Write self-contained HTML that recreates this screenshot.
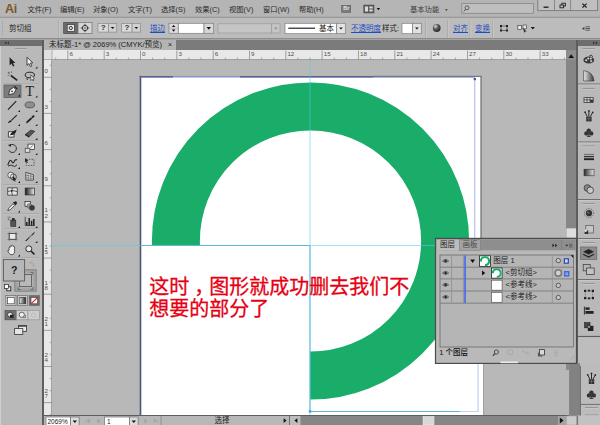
<!DOCTYPE html>
<html lang="zh-CN">
<head>
<meta charset="utf-8">
<title>Ai</title>
<style>
html,body{margin:0;padding:0;}
body{width:600px;height:425px;overflow:hidden;background:#b3b3b3;position:relative;
 font-family:"Liberation Sans","Noto Sans CJK SC",sans-serif;font-size:7.5px;color:#1c1c1c;}
.a{position:absolute;}
.t{position:absolute;white-space:nowrap;font-size:7.5px;line-height:10px;color:#222;}
.lk{color:#1d4fc4;text-decoration:underline;}
#menubar{left:0;top:0;width:600px;height:18px;background:#b5b5b5;}
#ctrl{left:0;top:18px;width:600px;height:22px;background:#bcbcbc;}
#tabbar{left:0;top:40px;width:600px;height:10px;background:#7b7b7b;}
#tab{left:44px;top:40px;width:132px;height:10px;background:#b4b4b4;}
#tools{left:0;top:46px;width:42px;height:379px;background:#b9b9b9;}
#toolhead{left:0;top:40px;width:42px;height:6px;background:#6e6e6e;}
#toolborder{left:42px;top:40px;width:2px;height:385px;background:#5e5e5e;}
#hruler{left:44px;top:50px;width:522px;height:10px;background:#e8e8e8;border-bottom:1px solid #a2a2a2;box-sizing:border-box;}
#vruler{left:44px;top:60px;width:8px;height:356px;background:#e8e8e8;border-right:1px solid #a2a2a2;box-sizing:border-box;}
#canvas{left:52px;top:60px;width:514px;height:356px;background:#b8b8b8;}
#vscroll{left:566px;top:50px;width:10px;height:366px;background:#868686;}
#dock{left:578px;top:46px;width:22px;height:379px;background:#b9b9b9;}
#dockhead{left:576px;top:40px;width:24px;height:6px;background:#6e6e6e;}
#dockborder{left:576px;top:40px;width:2px;height:326px;background:#5e5e5e;}
#status{left:44px;top:416px;width:534px;height:9px;background:#b6b6b6;}
.rl{position:absolute;font-size:6.2px;line-height:6px;color:#505050;}
.inp{position:absolute;background:#fff;border:1px solid #7d7d7d;box-sizing:border-box;}
.btn{position:absolute;background:#c9c9c9;border:1px solid #7d7d7d;box-sizing:border-box;}
</style>
</head>
<body>
<div class="a" id="menubar"></div>
<div class="a" id="ctrl"></div>
<div class="a" id="tabbar"></div>
<div class="a" id="tab"></div>
<div class="a" id="toolhead"></div>
<div class="a" id="tools"></div>
<div class="a" id="toolborder"></div>
<div class="a" id="hruler"></div>
<div class="a" id="vruler"></div>
<div class="a" id="canvas"></div>
<div class="a" id="vscroll"></div>
<div class="a" id="status"></div>
<div class="a" id="dockhead"></div>
<div class="a" id="dock"></div>
<div class="a" id="dockborder"></div>
<svg class="a" style="left:0;top:0;" width="600" height="425" viewBox="0 0 600 425">
<rect x="140" y="76" width="340.8" height="340" fill="#ffffff"/>
<rect x="476" y="300" width="7.6" height="116" fill="#ffffff"/>
<defs><clipPath id="cp"><path d="M140 60H480V420H310V245.5H140Z"/></clipPath></defs>
<g clip-path="url(#cp)"><circle cx="310.5" cy="241" r="134.6" fill="none" stroke="#1aad69" stroke-width="48"/></g>
<path d="M140.5 75.8V416" stroke="#4a5480" stroke-width="1.6"/>
<path d="M139.5 76.8H373" stroke="#8a94c8" stroke-width="1.6"/>
<path d="M373 76.4H481.4" stroke="#77778a" stroke-width="1.1"/><path d="M373 77.5H475" stroke="#aab4e6" stroke-width="1"/>
<path d="M139.5 76.8H173M240 76.8H373" stroke="#59638f" stroke-width="1.6"/>
<path d="M481 76V300" stroke="#5c5c5c" stroke-width="1"/>
<path d="M484 300V416" stroke="#5c5c5c" stroke-width="1"/>
<path d="M474.8 78V300" stroke="#a6b2ea" stroke-width="1"/>
<path d="M478 300V412" stroke="#b4c6ea" stroke-width="1"/>
<rect x="473.6" y="78" width="2.4" height="2.2" fill="#4a5ab0"/>
<path d="M52 245.5H566" stroke="#4fd0e6" stroke-opacity="0.55" stroke-width="1"/>
<path d="M310 60V416" stroke="#4fd0e6" stroke-opacity="0.55" stroke-width="1"/>
<path d="M141.5 245.5H310V411.5H460" stroke="#5fb8d8" stroke-width="1" fill="none"/>
<path d="M460 411.5H478" stroke="#c4d6ee" stroke-width="1" fill="none"/>
<rect x="308.8" y="410.2" width="2.4" height="2.4" fill="#3aa0d8"/>
<text x="149.3" y="293.8" font-family='"Liberation Sans","Noto Sans CJK SC",sans-serif' font-size="20" font-weight="400" fill="#e60012" stroke="#e60012" stroke-width="0.3">这时<tspan dx="5">，</tspan><tspan dx="-5">图形就成功删去我们不</tspan></text>
<text x="149.3" y="316.3" font-family='"Liberation Sans","Noto Sans CJK SC",sans-serif' font-size="20" font-weight="400" fill="#e60012" stroke="#e60012" stroke-width="0.3">想要的部分了</text>
<path d="M55.7 57.4V60" stroke="#8f8f8f" stroke-width="0.7"/>
<path d="M67.8 50.5V60" stroke="#8c8c8c" stroke-width="0.8"/>
<path d="M80.0 57.4V60" stroke="#8f8f8f" stroke-width="0.7"/>
<path d="M92.1 57.4V60" stroke="#8f8f8f" stroke-width="0.7"/>
<path d="M104.2 50.5V60" stroke="#8c8c8c" stroke-width="0.8"/>
<path d="M116.3 57.4V60" stroke="#8f8f8f" stroke-width="0.7"/>
<path d="M128.4 57.4V60" stroke="#8f8f8f" stroke-width="0.7"/>
<path d="M140.5 50.5V60" stroke="#8c8c8c" stroke-width="0.8"/>
<path d="M152.6 57.4V60" stroke="#8f8f8f" stroke-width="0.7"/>
<path d="M164.7 57.4V60" stroke="#8f8f8f" stroke-width="0.7"/>
<path d="M176.8 50.5V60" stroke="#8c8c8c" stroke-width="0.8"/>
<path d="M188.9 57.4V60" stroke="#8f8f8f" stroke-width="0.7"/>
<path d="M201.0 57.4V60" stroke="#8f8f8f" stroke-width="0.7"/>
<path d="M213.2 50.5V60" stroke="#8c8c8c" stroke-width="0.8"/>
<path d="M225.3 57.4V60" stroke="#8f8f8f" stroke-width="0.7"/>
<path d="M237.4 57.4V60" stroke="#8f8f8f" stroke-width="0.7"/>
<path d="M249.5 50.5V60" stroke="#8c8c8c" stroke-width="0.8"/>
<path d="M261.6 57.4V60" stroke="#8f8f8f" stroke-width="0.7"/>
<path d="M273.7 57.4V60" stroke="#8f8f8f" stroke-width="0.7"/>
<path d="M285.8 50.5V60" stroke="#8c8c8c" stroke-width="0.8"/>
<path d="M297.9 57.4V60" stroke="#8f8f8f" stroke-width="0.7"/>
<path d="M310.0 57.4V60" stroke="#8f8f8f" stroke-width="0.7"/>
<path d="M322.1 50.5V60" stroke="#8c8c8c" stroke-width="0.8"/>
<path d="M334.3 57.4V60" stroke="#8f8f8f" stroke-width="0.7"/>
<path d="M346.4 57.4V60" stroke="#8f8f8f" stroke-width="0.7"/>
<path d="M358.5 50.5V60" stroke="#8c8c8c" stroke-width="0.8"/>
<path d="M370.6 57.4V60" stroke="#8f8f8f" stroke-width="0.7"/>
<path d="M382.7 57.4V60" stroke="#8f8f8f" stroke-width="0.7"/>
<path d="M394.8 50.5V60" stroke="#8c8c8c" stroke-width="0.8"/>
<path d="M406.9 57.4V60" stroke="#8f8f8f" stroke-width="0.7"/>
<path d="M419.0 57.4V60" stroke="#8f8f8f" stroke-width="0.7"/>
<path d="M431.1 50.5V60" stroke="#8c8c8c" stroke-width="0.8"/>
<path d="M443.2 57.4V60" stroke="#8f8f8f" stroke-width="0.7"/>
<path d="M455.4 57.4V60" stroke="#8f8f8f" stroke-width="0.7"/>
<path d="M467.5 50.5V60" stroke="#8c8c8c" stroke-width="0.8"/>
<path d="M479.6 57.4V60" stroke="#8f8f8f" stroke-width="0.7"/>
<path d="M491.7 57.4V60" stroke="#8f8f8f" stroke-width="0.7"/>
<path d="M503.8 50.5V60" stroke="#8c8c8c" stroke-width="0.8"/>
<path d="M515.9 57.4V60" stroke="#8f8f8f" stroke-width="0.7"/>
<path d="M528.0 57.4V60" stroke="#8f8f8f" stroke-width="0.7"/>
<path d="M540.1 50.5V60" stroke="#8c8c8c" stroke-width="0.8"/>
<path d="M552.2 57.4V60" stroke="#8f8f8f" stroke-width="0.7"/>
<path d="M564.4 57.4V60" stroke="#8f8f8f" stroke-width="0.7"/>
<path d="M49.6 65.2H52" stroke="#8f8f8f" stroke-width="0.7"/>
<path d="M44 77.3H52" stroke="#8c8c8c" stroke-width="0.8"/>
<path d="M49.6 89.3H52" stroke="#8f8f8f" stroke-width="0.7"/>
<path d="M49.6 101.4H52" stroke="#8f8f8f" stroke-width="0.7"/>
<path d="M44 113.4H52" stroke="#8c8c8c" stroke-width="0.8"/>
<path d="M49.6 125.5H52" stroke="#8f8f8f" stroke-width="0.7"/>
<path d="M49.6 137.5H52" stroke="#8f8f8f" stroke-width="0.7"/>
<path d="M44 149.6H52" stroke="#8c8c8c" stroke-width="0.8"/>
<path d="M49.6 161.7H52" stroke="#8f8f8f" stroke-width="0.7"/>
<path d="M49.6 173.7H52" stroke="#8f8f8f" stroke-width="0.7"/>
<path d="M44 185.8H52" stroke="#8c8c8c" stroke-width="0.8"/>
<path d="M49.6 197.8H52" stroke="#8f8f8f" stroke-width="0.7"/>
<path d="M49.6 209.8H52" stroke="#8f8f8f" stroke-width="0.7"/>
<path d="M44 221.9H52" stroke="#8c8c8c" stroke-width="0.8"/>
<path d="M49.6 233.9H52" stroke="#8f8f8f" stroke-width="0.7"/>
<path d="M49.6 246.0H52" stroke="#8f8f8f" stroke-width="0.7"/>
<path d="M44 258.1H52" stroke="#8c8c8c" stroke-width="0.8"/>
<path d="M49.6 270.1H52" stroke="#8f8f8f" stroke-width="0.7"/>
<path d="M49.6 282.2H52" stroke="#8f8f8f" stroke-width="0.7"/>
<path d="M44 294.2H52" stroke="#8c8c8c" stroke-width="0.8"/>
<path d="M49.6 306.2H52" stroke="#8f8f8f" stroke-width="0.7"/>
<path d="M49.6 318.3H52" stroke="#8f8f8f" stroke-width="0.7"/>
<path d="M44 330.3H52" stroke="#8c8c8c" stroke-width="0.8"/>
<path d="M49.6 342.4H52" stroke="#8f8f8f" stroke-width="0.7"/>
<path d="M49.6 354.4H52" stroke="#8f8f8f" stroke-width="0.7"/>
<path d="M44 366.5H52" stroke="#8c8c8c" stroke-width="0.8"/>
<path d="M49.6 378.6H52" stroke="#8f8f8f" stroke-width="0.7"/>
<path d="M49.6 390.6H52" stroke="#8f8f8f" stroke-width="0.7"/>
<path d="M44 402.6H52" stroke="#8c8c8c" stroke-width="0.8"/>
<path d="M49.6 414.7H52" stroke="#8f8f8f" stroke-width="0.7"/>
<rect x="44" y="50" width="8" height="10" fill="#e0e0e0"/>
<path d="M52 50V60M44 59.5H52" stroke="#a2a2a2" stroke-width="0.8"/>
<path d="M0 17.5H600" stroke="#9a9a9a" stroke-width="1"/><path d="M0 16.5H600" stroke="#acacac" stroke-width="1"/>
<path d="M0 38.7H600" stroke="#8c8c8c" stroke-width="1.6"/>
<path d="M2.5 21V37" stroke="#9a9a9a" stroke-width="1" stroke-dasharray="1 1"/>
<path d="M58.5 20V38" stroke="#a4a4a4" stroke-width="0.8"/><path d="M59.3 20V38" stroke="#cacaca" stroke-width="0.8"/>
<path d="M425.5 20V38" stroke="#a4a4a4" stroke-width="0.8"/><path d="M426.3 20V38" stroke="#cacaca" stroke-width="0.8"/>
<path d="M447.5 20V38" stroke="#a4a4a4" stroke-width="0.8"/><path d="M448.3 20V38" stroke="#cacaca" stroke-width="0.8"/>
<path d="M470 20V38" stroke="#a4a4a4" stroke-width="0.8"/><path d="M470.8 20V38" stroke="#cacaca" stroke-width="0.8"/>
<path d="M492.5 20V38" stroke="#a4a4a4" stroke-width="0.8"/><path d="M493.3 20V38" stroke="#cacaca" stroke-width="0.8"/>
<rect x="63.7" y="22.5" width="14.3" height="11" fill="#6c6c6c" stroke="#4e4e4e" stroke-width="0.8"/>
<rect x="67.2" y="24.6" width="7.2" height="6.8" fill="#e8e8e8" stroke="#2a2a2a" stroke-width="0.6"/>
<circle cx="70.8" cy="28" r="1.6" fill="#e8e8e8" stroke="#222" stroke-width="0.9"/>
<rect x="78" y="22.5" width="14" height="11" fill="#d6d6d6" stroke="#7a7a7a" stroke-width="0.8"/>
<circle cx="85" cy="28" r="2.7" fill="none" stroke="#222" stroke-width="0.8"/><path d="M85 23.8V26.2M85 29.8V32.2M80.8 28H83.2M86.8 28H89.2" stroke="#222" stroke-width="0.8"/><circle cx="85" cy="28" r="0.7" fill="#222"/>
<rect x="98" y="23.5" width="10.4" height="8.6" fill="#d9d9d9" stroke="#8a8a8a" stroke-width="0.7"/>
<rect x="108.4" y="23.5" width="8.3" height="8.6" fill="#d0d0d0" stroke="#8a8a8a" stroke-width="0.7"/>
<path d="M110.8 26.9H114.39999999999999L112.6 29.1Z" fill="#111"/>
<rect x="121.7" y="23.5" width="10.4" height="8.6" fill="#d9d9d9" stroke="#8a8a8a" stroke-width="0.7"/>
<rect x="132.1" y="23.5" width="8.3" height="8.6" fill="#d0d0d0" stroke="#8a8a8a" stroke-width="0.7"/>
<path d="M134.5 26.9H138.10000000000002L136.3 29.1Z" fill="#111"/>
<rect x="169" y="23.3" width="9.3" height="10" fill="#dcdcdc" stroke="#7d7d7d" stroke-width="0.7"/>
<path d="M171.79999999999998 27.1H175.4L173.6 24.9Z" fill="#111"/>
<path d="M171.79999999999998 29.5H175.4L173.6 31.700000000000003Z" fill="#111"/>
<path d="M169 28.3H178.3" stroke="#9a9a9a" stroke-width="0.5"/>
<rect x="178.3" y="23.3" width="25.7" height="10" fill="#ffffff" stroke="#7d7d7d" stroke-width="0.7"/>
<rect x="204" y="23.3" width="9.7" height="10" fill="#d6d6d6" stroke="#7d7d7d" stroke-width="0.7"/>
<path d="M206.60000000000002 26.900000000000002H211.0L208.8 29.7Z" fill="#111"/>
<rect x="218" y="23.8" width="53.7" height="9.2" fill="#c5c5c5" stroke="#9a9a9a" stroke-width="0.7"/>
<rect x="271.7" y="23.8" width="8.3" height="9.2" fill="#c5c5c5" stroke="#9a9a9a" stroke-width="0.7"/>
<path d="M274.0 27.4H277.6L275.8 29.6Z" fill="#8a8a8a"/>
<rect x="285" y="23.3" width="51.7" height="10.4" fill="#ffffff" stroke="#7d7d7d" stroke-width="0.7"/>
<path d="M288.3 28.2H315" stroke="#111" stroke-width="1.1"/>
<rect x="336.7" y="23.3" width="8.6" height="10.4" fill="#e4e4e4" stroke="#7d7d7d" stroke-width="0.7"/>
<path d="M339.2 27.4H342.8L341 29.6Z" fill="#111"/>
<rect x="402" y="23.3" width="10.5" height="10.4" fill="#ffffff" stroke="#7d7d7d" stroke-width="0.7"/>
<rect x="412.5" y="23.3" width="8.8" height="10.4" fill="#e0e0e0" stroke="#7d7d7d" stroke-width="0.7"/>
<path d="M415.09999999999997 27.4H418.7L416.9 29.6Z" fill="#111"/>
<defs><radialGradient id="gl" cx="0.35" cy="0.3" r="0.8"><stop offset="0" stop-color="#d8d8d8"/><stop offset="0.45" stop-color="#555"/><stop offset="1" stop-color="#222"/></radialGradient></defs>
<circle cx="436.7" cy="28" r="3.9" fill="url(#gl)"/>
<path d="M500 25H502V27H500ZM506 25H508V27H506ZM500 29.5H502V31.5H500ZM506 29.5H508V31.5H506Z" fill="#222"/><path d="M502 26H506M502 30.5H506M501 27V29.5M507 27V29.5" stroke="#444" stroke-width="0.7"/>
<rect x="517.8" y="25.6" width="3.6" height="3.8" fill="#e8e8e8" stroke="#333" stroke-width="0.6"/>
<rect x="523" y="25" width="3.6" height="3.8" fill="#e8e8e8" stroke="#333" stroke-width="0.6"/>
<path d="M523 28L526.6 31.5L525 31.6L524.4 33L523 28Z" fill="#222"/>
<path d="M530.8 26.9H534.8L532.8 29.5Z" fill="#111"/>
<path d="M582 28.5L584.4 27V30Z" fill="#333"/><path d="M585.4 26.8H590M585.4 28.5H590M585.4 30.2H590" stroke="#444" stroke-width="0.8"/>
<rect x="341.7" y="5.4" width="9" height="7" fill="#7c7c7c" stroke="#5a5a5a" stroke-width="0.6"/>
<rect x="363.8" y="5" width="10.2" height="8" fill="#5e5e5e" stroke="#444" stroke-width="0.5"/>
<path d="M365 6.5H368V11.5H365ZM369.4 6.5H372.6V8.4H369.4ZM369.4 9.6H372.6V11.5H369.4Z" fill="#dadada"/>
<path d="M376.7 8.1H380.09999999999997L378.4 10.299999999999999Z" fill="#111"/>
<path d="M445.09999999999997 9.299999999999999H447.7L446.4 11.1Z" fill="#333"/>
<rect x="461.8" y="3.6" width="71.7" height="9.7" fill="#bfbfbf" stroke="#858585" stroke-width="0.8"/>
<circle cx="467" cy="7.8" r="2" fill="none" stroke="#444" stroke-width="0.8"/><path d="M465.6 9.4L463.8 11.4" stroke="#444" stroke-width="1"/>
<rect x="537.8" y="-1" width="59.8" height="11.6" fill="#bfbfbf" stroke="#7a7a7a" stroke-width="0.9"/>
<path d="M554.5 0V10.6M570.6 0V10.6" stroke="#7a7a7a" stroke-width="0.8"/>
<path d="M543.5 7.2H548.5" stroke="#222" stroke-width="1.4"/>
<rect x="561.8" y="3.2" width="3.6" height="2.8" fill="none" stroke="#222" stroke-width="0.9"/><rect x="560" y="5" width="3.6" height="2.8" fill="#bfbfbf" stroke="#222" stroke-width="0.9"/>
<path d="M582.4 3.6L586.6 7.6M586.6 3.6L582.4 7.6" stroke="#222" stroke-width="1.3"/>
<path d="M6.2 41.6L4.6 43L6.2 44.4ZM8.8 41.6L7.2 43L8.8 44.4Z" fill="#2a2a2a"/>
<path d="M593.2 41.6L594.8 43L593.2 44.4ZM595.8 41.6L597.4 43L595.8 44.4Z" fill="#2a2a2a"/>
<path d="M15 48.5H26.5" stroke="#8e8e8e" stroke-width="1"/><path d="M15 49.3H26.5" stroke="#d0d0d0" stroke-width="0.6"/>
<path d="M0.5 46V425" stroke="#cfcfcf" stroke-width="1"/>
<path d="M3 84H39" stroke="#9c9c9c" stroke-width="0.7"/><path d="M3 84.7H39" stroke="#cbcbcb" stroke-width="0.6"/>
<path d="M3 140.5H39" stroke="#9c9c9c" stroke-width="0.7"/><path d="M3 141.2H39" stroke="#cbcbcb" stroke-width="0.6"/>
<path d="M3 184.7H39" stroke="#9c9c9c" stroke-width="0.7"/><path d="M3 185.39999999999998H39" stroke="#cbcbcb" stroke-width="0.6"/>
<path d="M3 213.5H39" stroke="#9c9c9c" stroke-width="0.7"/><path d="M3 214.2H39" stroke="#cbcbcb" stroke-width="0.6"/>
<path d="M3 228.5H39" stroke="#9c9c9c" stroke-width="0.7"/><path d="M3 229.2H39" stroke="#cbcbcb" stroke-width="0.6"/>
<path d="M3 257.5H39" stroke="#9c9c9c" stroke-width="0.7"/><path d="M3 258.2H39" stroke="#cbcbcb" stroke-width="0.6"/>
<g transform="translate(12.4 62)"><path d="M-2.8 -4.8L-2.8 3.4L-0.9 1.6L0.6 4.6L2 3.9L0.6 1L3 0.9Z" fill="#222"/></g>
<g transform="translate(29.8 62)"><path d="M-2.8 -4.8L-2.8 3.4L-0.9 1.6L0.6 4.6L2 3.9L0.6 1L3 0.9Z" fill="#f2f2f2" stroke="#222" stroke-width="0.8"/></g>
<path d="M37.4 66.6V68.6H35.4Z" fill="#111"/>
<g transform="translate(12.4 76)"><path d="M-1.5 -0.5L4.8 4.4" stroke="#222" stroke-width="1.6"/><path d="M-3.6 -4.2V-2.2M-4.6 -3.2H-2.6M-0.8 -4.6V-3M-4.8 -0.4H-3.2M-2.6 -1.6L-1.6 -0.6" stroke="#555" stroke-width="0.7"/></g>
<g transform="translate(29.8 76)"><ellipse cx="0" cy="-1" rx="4.6" ry="2.8" fill="none" stroke="#222" stroke-width="1"/><path d="M-2.6 1.6Q-3.6 3.2 -2 4" stroke="#222" stroke-width="0.9" fill="none"/><path d="M1 -1.2V4.6L2.2 3.4L3.2 5L3.9 4.6L3 3L4.6 2.8Z" fill="#f2f2f2" stroke="#222" stroke-width="0.6"/></g>
<rect x="4" y="85" width="17" height="12.4" fill="#7d7d7d" stroke="#565656" stroke-width="0.7"/>
<g transform="translate(12.4 91)"><path d="M-3.8 3.8L-2.6 -1.2L1.2 -3.6L3.6 -1.2L1.2 2.6Z" fill="#efefef" stroke="#222" stroke-width="0.8"/><path d="M1.6 -4.4L4.4 -1.6L5.2 -2.6L2.6 -5.2Z" fill="#222"/><circle cx="-0.4" cy="0.4" r="0.8" fill="#222"/></g>
<path d="M20 94.4V96.4H18Z" fill="#111"/>
<path d="M37.4 95.6V97.6H35.4Z" fill="#111"/>
<g transform="translate(12.4 105.5)"><path d="M-4.4 4.2L3.8 -4.4" stroke="#222" stroke-width="1.2"/></g>
<path d="M20.0 110.1V112.1H18.0Z" fill="#111"/>
<g transform="translate(29.8 105.5)"><ellipse cx="0" cy="-0.6" rx="4.8" ry="3" fill="#8e8e8e" stroke="#444" stroke-width="0.7"/></g>
<path d="M37.4 110.1V112.1H35.4Z" fill="#111"/>
<g transform="translate(12.4 119.5)"><path d="M4.4 -4.4L-0.8 0.6" stroke="#222" stroke-width="1.1"/><path d="M-1 0.4Q-3.8 1 -4.6 3.4Q-2 3.6 -0.4 1.6Z" fill="#222"/></g>
<path d="M20.0 124.1V126.1H18.0Z" fill="#111"/>
<g transform="translate(29.8 119.5)"><path d="M3.6 -4.6L5 -3.2L-1.6 3L-3.8 3.9L-3 1.8Z" fill="#222"/><path d="M1 -2.4L2.6 -0.8" stroke="#ddd" stroke-width="0.6"/></g>
<path d="M37.4 124.1V126.1H35.4Z" fill="#111"/>
<g transform="translate(12.4 133.5)"><path d="M-4 -1.8H1.6V3.6H-4Z" fill="#f0f0f0" stroke="#222" stroke-width="0.8"/><path d="M-2.6 1.8Q-0.6 -2.6 4.4 -4L3 -0.6Q1.6 2 -2.6 1.8Z" fill="#222"/></g>
<g transform="translate(29.8 133.5)"><path d="M-4.6 1L1 -3.4L5 -2.2L-0.6 3.4Z" fill="#555" stroke="#222" stroke-width="0.6"/><path d="M-4.6 1L-0.6 3.4" stroke="#222" stroke-width="1.2"/></g>
<path d="M37.4 138.1V140.1H35.4Z" fill="#111"/>
<g transform="translate(12.4 148.5)"><path d="M-2.4 -3.2A4 4 0 1 1 -3.6 1.8" fill="none" stroke="#222" stroke-width="0.9"/><path d="M-4.4 -3.4L-1.2 -4.6L-1.8 -1.6Z" fill="#222"/></g>
<path d="M20.0 153.1V155.1H18.0Z" fill="#111"/>
<g transform="translate(29.8 148.5)"><rect x="-1.8" y="-4.4" width="6.6" height="5.4" fill="#f2f2f2" stroke="#222" stroke-width="0.7"/><rect x="-4.6" y="-0.2" width="4.6" height="4" fill="#dcdcdc" stroke="#444" stroke-width="0.7"/><path d="M0.4 -0.6L3 -3" stroke="#222" stroke-width="0.6"/></g>
<path d="M37.4 153.1V155.1H35.4Z" fill="#111"/>
<g transform="translate(12.4 162.5)"><path d="M-4.6 2.6Q-2.4 -4.6 -0.6 -1Q0.6 2 2 -1.4Q3 -3.4 4.6 -2.6" fill="none" stroke="#222" stroke-width="1.1"/><path d="M-4.4 3.6Q-1 1.6 0.6 3.4T4.6 2.2" fill="none" stroke="#222" stroke-width="0.9"/></g>
<path d="M20.0 167.1V169.1H18.0Z" fill="#111"/>
<g transform="translate(29.8 162.5)"><rect x="-3.4" y="-3.2" width="7.6" height="6.2" fill="none" stroke="#333" stroke-width="0.7" stroke-dasharray="1.4 1.2"/><path d="M-4.8 -4.6V0L-3.6 -1.1L-2.8 0.6L-2 0.2L-2.8 -1.4L-1.4 -1.6Z" fill="#222"/></g>
<g transform="translate(12.4 176.5)"><circle cx="-1.6" cy="-1.4" r="3" fill="#e8e8e8" stroke="#333" stroke-width="0.7"/><circle cx="1" cy="0.4" r="3" fill="none" stroke="#333" stroke-width="0.7"/><path d="M0.4 -0.6V4.6L1.6 3.5L2.5 5.2L3.3 4.8L2.5 3.2L4 3Z" fill="#222"/></g>
<path d="M20.0 181.1V183.1H18.0Z" fill="#111"/>
<g transform="translate(29.8 176.5)"><path d="M-4 -4.2L3.6 -1.8V3.6H-4Z" fill="#e0e0e0" stroke="#222" stroke-width="0.7"/><path d="M-1.6 -3.4V3.6M1 -2.6V3.6M-4 -1.2L3.6 0M-4 1.4L3.6 1.8" stroke="#444" stroke-width="0.5"/></g>
<path d="M37.4 181.1V183.1H35.4Z" fill="#111"/>
<g transform="translate(12.4 191.5)"><rect x="-4.6" y="-3.6" width="9.4" height="7.2" fill="#e6e6e6" stroke="#222" stroke-width="0.7"/><path d="M-4.6 0Q0 -2 4.8 0M0 -3.6Q-1.6 0 0 3.6" fill="none" stroke="#222" stroke-width="0.7"/><circle cx="-0.6" cy="-0.6" r="0.9" fill="#222"/></g>
<defs><linearGradient id="tg" x1="0" x2="1"><stop offset="0" stop-color="#1a1a1a"/><stop offset="1" stop-color="#f0f0f0"/></linearGradient></defs>
<g transform="translate(29.8 191.5)"><rect x="-4.6" y="-3.4" width="9.4" height="6.8" fill="url(#tg)" stroke="#222" stroke-width="0.7"/></g>
<g transform="translate(12.4 206)"><path d="M-4.6 4.6L-3.8 2.2L0.6 -2.2L2.2 -0.6L-2.2 3.8Z" fill="#e8e8e8" stroke="#222" stroke-width="0.7"/><path d="M0.4 -3.4L3.4 -0.4L4.8 -3.4L3.4 -4.8Z" fill="#222"/></g>
<path d="M20.0 210.6V212.6H18.0Z" fill="#111"/>
<g transform="translate(29.8 206)"><rect x="-4.8" y="-4.4" width="5.4" height="5" fill="#e8e8e8" stroke="#222" stroke-width="0.7"/><circle cx="-0.4" cy="0" r="2.4" fill="#9a9a9a" stroke="#444" stroke-width="0.5"/><circle cx="2.2" cy="1.8" r="2.8" fill="#3a3a3a"/></g>
<g transform="translate(12.4 221.5)"><rect x="-1.6" y="-1.4" width="5" height="6.2" fill="#555" stroke="#222" stroke-width="0.6"/><rect x="-0.4" y="-3.4" width="2.6" height="2" fill="#222"/><path d="M-4.8 -4.2L-3.2 -3M-4.6 -2L-3 -1.6M-3 -5L-2 -3.6" stroke="#444" stroke-width="0.7"/></g>
<path d="M20.0 226.1V228.1H18.0Z" fill="#111"/>
<g transform="translate(29.8 221.5)"><path d="M-4.6 -4.6V4H5" fill="none" stroke="#222" stroke-width="0.7"/><path d="M-3 4V0.4M-0.6 4V-3.6M1.8 4V-0.8M4 4V-2.4" stroke="#222" stroke-width="1.5"/></g>
<path d="M37.4 226.1V228.1H35.4Z" fill="#111"/>
<g transform="translate(12.4 236.5)"><rect x="-3.2" y="-3" width="6.8" height="5.8" fill="#eaeaea" stroke="#222" stroke-width="0.7"/><path d="M-5 -3H5.2M-5 2.8H5.2M-3.2 -4.8V4.6M3.6 -4.8V4.6" stroke="#555" stroke-width="0.5"/></g>
<g transform="translate(29.8 236.5)"><path d="M-4.8 4.4L3.4 -3.6L5 -4.8L4.2 -2.8L-3.4 4.6Z" fill="#222"/><path d="M-1 1.4L2.4 -1.8" stroke="#ddd" stroke-width="0.6"/></g>
<path d="M37.4 241.1V243.1H35.4Z" fill="#111"/>
<g transform="translate(12.4 250)"><path d="M-3.4 0.6V-2.6Q-2.8 -3.4 -2.2 -2.6V-3.8Q-1.4 -4.8 -0.8 -3.8V-4.4Q0 -5.2 0.8 -4.2V-3.4Q1.6 -4.2 2.2 -3.2V1.6Q2.2 3.8 0.6 4.6H-2Q-3 3.8 -4.8 0.8Q-4.4 -0.2 -3.4 0.6Z" fill="#f0f0f0" stroke="#222" stroke-width="0.7"/></g>
<path d="M20.0 254.6V256.6H18.0Z" fill="#111"/>
<g transform="translate(29.8 250)"><circle cx="-1" cy="-1.2" r="3" fill="#e4e4e4" stroke="#222" stroke-width="0.9"/><path d="M1.2 1L4.6 4.4" stroke="#222" stroke-width="1.6"/></g>
<rect x="15" y="270" width="21" height="21" fill="#b0b0b0" stroke="#555" stroke-width="0.8"/>
<rect x="16.6" y="271.6" width="17.8" height="17.8" fill="none" stroke="#a4a4a4" stroke-width="2.4"/>
<rect x="19.4" y="274.4" width="12.2" height="12.2" fill="#b9b9b9" stroke="#555" stroke-width="0.8"/>
<path d="M18 289.6V286.8M18 289.6H20.8M33 289.6V286.8M33 289.6H30.2M33 272.4V275M33 272.4H30.4" stroke="#444" stroke-width="0.6" fill="none"/>
<rect x="3.4" y="259.6" width="21.2" height="21.4" fill="#b7b7b7" stroke="#5a5a5a" stroke-width="0.9"/>
<path d="M30.6 262.6Q33.6 262.6 33.8 265.6" fill="none" stroke="#9a9a9a" stroke-width="0.7"/><path d="M30.8 261.4L29.4 262.6L30.8 263.8ZM32.6 265.4L33.8 266.8L35 265.4Z" fill="#9a9a9a"/>
<rect x="6.8" y="286.8" width="4" height="4" fill="#f2f2f2" stroke="#222" stroke-width="0.9"/><rect x="4.4" y="284.4" width="4" height="4" fill="#fff" stroke="#222" stroke-width="0.7"/>
<defs><linearGradient id="tg2" x1="0" x2="1"><stop offset="0" stop-color="#f4f4f4"/><stop offset="1" stop-color="#222"/></linearGradient></defs>
<rect x="5.8" y="295.6" width="10.2" height="10" fill="#cfcfcf" stroke="#6a6a6a" stroke-width="0.7"/>
<rect x="7.6" y="297.4" width="6.6" height="6.4" fill="#ffffff" stroke="#333" stroke-width="0.6"/>
<rect x="17.4" y="295.6" width="10.2" height="10" fill="#cfcfcf" stroke="#6a6a6a" stroke-width="0.7"/>
<rect x="19.2" y="297.4" width="6.6" height="6.4" fill="url(#tg2)" stroke="#333" stroke-width="0.6"/>
<rect x="29.2" y="295.6" width="10.2" height="10" fill="#6e6e6e" stroke="#6a6a6a" stroke-width="0.7"/>
<rect x="31.0" y="297.4" width="6.6" height="6.4" fill="#ffffff" stroke="#333" stroke-width="0.6"/>
<path d="M31.2 303.6L37.4 297.6" stroke="#e0202a" stroke-width="1.3"/>
<rect x="5" y="310.6" width="11.4" height="9.2" fill="#6e6e6e" stroke="#4e4e4e" stroke-width="0.7"/>
<rect x="16.4" y="310.6" width="11.6" height="9.2" fill="#d2d2d2" stroke="#8a8a8a" stroke-width="0.7"/>
<rect x="28" y="310.6" width="11.4" height="9.2" fill="#cdcdcd" stroke="#9a9a9a" stroke-width="0.7"/>
<circle cx="10" cy="314.6" r="2.4" fill="#e8e8e8" stroke="#222" stroke-width="0.7"/><rect x="10" y="314.8" width="3.6" height="3" fill="#222"/>
<circle cx="21.8" cy="314.8" r="2.6" fill="#efefef" stroke="#333" stroke-width="0.7"/><path d="M22.6 317.6H25.4V315" stroke="#555" stroke-width="0.7" fill="none"/>
<circle cx="33.6" cy="315.2" r="2.2" fill="none" stroke="#b4b4b4" stroke-width="0.7"/>
<rect x="18.4" y="325.4" width="8.2" height="6" fill="#e6e6e6" stroke="#333" stroke-width="0.8"/><path d="M18.4 326.2H26.6" stroke="#333" stroke-width="1"/><rect x="14.6" y="328.6" width="8.2" height="5.8" fill="#e6e6e6" stroke="#333" stroke-width="0.8"/>
<rect x="484" y="363" width="85.5" height="53" fill="#b8b8b8"/>
<rect x="569.2" y="363" width="11" height="52.5" fill="#828282"/>
<rect x="580.2" y="363" width="20" height="62" fill="#bcbcbc"/>
<path d="M580.4 366V416" stroke="#6a6a6a" stroke-width="1"/>
<rect x="566" y="363" width="3.4" height="7" fill="#8a8a8a"/>
<rect x="566.5" y="50.5" width="9.5" height="9.5" fill="#8e8e8e"/>
<path d="M568.4 58L571.2 54.2L574 58Z" fill="#111"/>
<rect x="566.8" y="228.8" width="9" height="8.6" fill="#dedede" stroke="#f2f2f2" stroke-width="0.5"/>
<path d="M582.5 48.5H595" stroke="#8e8e8e" stroke-width="1"/><path d="M582.5 49.3H595" stroke="#d2d2d2" stroke-width="0.6"/>
<path d="M578 84H600" stroke="#6e6e6e" stroke-width="1"/><path d="M578 85H600" stroke="#cdcdcd" stroke-width="0.7"/>
<path d="M578 142H600" stroke="#6e6e6e" stroke-width="1"/><path d="M578 143H600" stroke="#cdcdcd" stroke-width="0.7"/>
<path d="M578 199.5H600" stroke="#6e6e6e" stroke-width="1"/><path d="M578 200.5H600" stroke="#cdcdcd" stroke-width="0.7"/>
<path d="M578 238.5H600" stroke="#6e6e6e" stroke-width="1"/><path d="M578 239.5H600" stroke="#cdcdcd" stroke-width="0.7"/>
<path d="M578 279.5H600" stroke="#6e6e6e" stroke-width="1"/><path d="M578 280.5H600" stroke="#cdcdcd" stroke-width="0.7"/>
<path d="M582.5 88.5H595" stroke="#8e8e8e" stroke-width="1"/><path d="M582.5 89.3H595" stroke="#d2d2d2" stroke-width="0.6"/>
<path d="M582.5 146H595" stroke="#8e8e8e" stroke-width="1"/><path d="M582.5 146.8H595" stroke="#d2d2d2" stroke-width="0.6"/>
<path d="M582.5 203.5H595" stroke="#8e8e8e" stroke-width="1"/><path d="M582.5 204.3H595" stroke="#d2d2d2" stroke-width="0.6"/>
<path d="M582.5 242.5H595" stroke="#8e8e8e" stroke-width="1"/><path d="M582.5 243.3H595" stroke="#d2d2d2" stroke-width="0.6"/>
<path d="M582.5 283.5H595" stroke="#8e8e8e" stroke-width="1"/><path d="M582.5 284.3H595" stroke="#d2d2d2" stroke-width="0.6"/>
<path d="M578 336.5H600" stroke="#5e5e5e" stroke-width="1.2"/>
<rect x="578" y="337.2" width="22" height="26" fill="#bdbdbd"/>
<g transform="translate(588.8 59.6)"><ellipse cx="0" cy="0.4" rx="5.4" ry="3.6" fill="#3a3a3a"/><circle cx="-2.6" cy="0.6" r="1" fill="#ddd"/><circle cx="-0.6" cy="-1.2" r="1" fill="#ddd"/><circle cx="2" cy="-1" r="1" fill="#ddd"/><circle cx="2.4" cy="1.6" r="1.1" fill="#bababa"/><path d="M0.6 -3.6Q3 -5.4 4 -3" stroke="#2a2a2a" stroke-width="1" fill="none"/></g>
<defs><linearGradient id="cg" x1="0" x2="1"><stop offset="0" stop-color="#e8e8e8"/><stop offset="1" stop-color="#3a3a3a"/></linearGradient><linearGradient id="gg" x1="0" x2="1"><stop offset="0" stop-color="#2a2a2a"/><stop offset="1" stop-color="#e8e8e8"/></linearGradient></defs>
<path d="M583.6 81V70.6Q593 71.6 594 81Z" fill="url(#cg)" stroke="#333" stroke-width="0.6"/>
<rect x="583.6" y="97" width="10" height="5.8" fill="#3a3a3a"/>
<path d="M584.4 97.8H586.6V99.4H584.4ZM587.4 97.8H589.6V99.4H587.4ZM590.4 97.8H592.8V99.4H590.4ZM584.4 100.2H586.6V102H584.4ZM587.4 100.2H589.6V102H587.4Z" fill="#d8d8d8"/>
<g transform="translate(588.8 116)"><rect x="-2.6" y="0.6" width="5.4" height="4.8" fill="#2e2e2e"/><path d="M-2.6 2.8H2.8M0 0.6V5.4" stroke="#8a8a8a" stroke-width="0.5"/><path d="M-1.6 0.4L-3.6 -3.6M0.1 0.4V-5M1.6 0.4L3.8 -3.4" stroke="#2a2a2a" stroke-width="1"/><circle cx="-3.7" cy="-3.8" r="0.9" fill="#2a2a2a"/><circle cx="0.1" cy="-5.1" r="0.9" fill="#2a2a2a"/><circle cx="3.9" cy="-3.6" r="0.9" fill="#2a2a2a"/></g>
<g transform="translate(588.8 132.6)"><circle cx="0" cy="-2" r="2.2" fill="#333"/><circle cx="-2.4" cy="0.8" r="2.2" fill="#333"/><circle cx="2.4" cy="0.8" r="2.2" fill="#333"/><path d="M0 0V3.4M-1.8 3.8H1.8" stroke="#333" stroke-width="1"/></g>
<path d="M584 154.4H594" stroke="#555" stroke-width="0.8"/><path d="M584 156.6H594" stroke="#333" stroke-width="1.3"/><path d="M584 159.2H594" stroke="#222" stroke-width="1.9"/>
<rect x="584" y="169.2" width="10" height="6.6" fill="url(#gg)" stroke="#333" stroke-width="0.6"/>
<circle cx="587.4" cy="188" r="3.3" fill="#8a8a8a" stroke="#333" stroke-width="0.8"/><circle cx="590.2" cy="190.2" r="3.3" fill="#d6d6d6" fill-opacity="0.8" stroke="#333" stroke-width="0.8"/>
<circle cx="589" cy="213.2" r="4.6" fill="none" stroke="#444" stroke-width="0.7" stroke-dasharray="0.9 0.9"/><circle cx="589" cy="213.2" r="3.1" fill="#333"/><circle cx="588.4" cy="212.6" r="1.2" fill="#666"/>
<rect x="585.8" y="225.6" width="7.6" height="7.4" fill="#c6c6c6" stroke="#555" stroke-width="0.7"/>
<path d="M584.6 230.4H588.2V234H584.6Z" fill="#333"/><circle cx="585.6" cy="230.8" r="1.2" fill="#e8e8e8"/>
<rect x="580.4" y="247" width="16.4" height="12.6" fill="#8c8c8c" stroke="#6a6a6a" stroke-width="0.7"/>
<path d="M588.6 249L594 251.8L588.6 254.6L583.2 251.8Z" fill="#222"/><path d="M583.2 254.2L588.6 257L594 254.2" fill="none" stroke="#222" stroke-width="1.2"/>
<rect x="583.2" y="264.4" width="7" height="6.4" fill="none" stroke="#444" stroke-width="0.8"/><rect x="586.6" y="268" width="7.6" height="6.4" fill="#c2c2c2" stroke="#444" stroke-width="0.8"/>
<rect x="585.4" y="291" width="7.2" height="7" fill="none" stroke="#555" stroke-width="0.7" stroke-dasharray="1 1"/><path d="M584 289.8H586.2V292H584ZM591.8 289.8H594V292H591.8ZM584 297H586.2V299.2H584ZM591.8 297H594V299.2H591.8ZM587.9 289.8H590.1V291.4H587.9ZM587.9 297.6H590.1V299.2H587.9Z" fill="#222"/>
<path d="M584.4 306.6V314.6" stroke="#222" stroke-width="0.9"/><rect x="585.4" y="307.4" width="4.2" height="2.4" fill="#222"/><rect x="585.4" y="311" width="8.2" height="2.8" fill="#222"/>
<rect x="584.6" y="322.6" width="5.4" height="5.2" fill="#444" stroke="#222" stroke-width="0.6"/><rect x="587.8" y="325.8" width="5.6" height="5.2" fill="#222"/><rect x="588" y="326" width="2" height="1.8" fill="#9a9a9a"/>
<g transform="translate(591.4 378.6)"><rect x="-2.6" y="0.6" width="5.4" height="4.8" fill="#2e2e2e"/><path d="M-2.6 2.8H2.8M0 0.6V5.4" stroke="#8a8a8a" stroke-width="0.5"/><path d="M-1.6 0.4L-3.6 -3.6M0.1 0.4V-5M1.6 0.4L3.8 -3.4" stroke="#2a2a2a" stroke-width="1"/><circle cx="-3.7" cy="-3.8" r="0.9" fill="#2a2a2a"/><circle cx="0.1" cy="-5.1" r="0.9" fill="#2a2a2a"/><circle cx="3.9" cy="-3.6" r="0.9" fill="#2a2a2a"/></g>
<g transform="translate(591.4 394.6)"><circle cx="0" cy="-2" r="2.2" fill="#333"/><circle cx="-2.4" cy="0.8" r="2.2" fill="#333"/><circle cx="2.4" cy="0.8" r="2.2" fill="#333"/><path d="M0 0V3.4M-1.8 3.8H1.8" stroke="#333" stroke-width="1"/></g>
<path d="M580.6 404.4H600" stroke="#6e6e6e" stroke-width="1"/>
<path d="M585 407.5H598" stroke="#8e8e8e" stroke-width="1"/><path d="M585 408.3H598" stroke="#d2d2d2" stroke-width="0.6"/>
<path d="M585 415H598" stroke="#8e8e8e" stroke-width="1"/><path d="M585 415.8H598" stroke="#d2d2d2" stroke-width="0.6"/>
<rect x="44" y="415.5" width="525" height="9.5" fill="#b8b8b8"/>
<path d="M44 415.5H569" stroke="#5e5e5e" stroke-width="1"/>
<rect x="46" y="417" width="24.5" height="8.5" fill="#ffffff" stroke="#6e6e6e" stroke-width="0.7"/>
<rect x="70.5" y="417" width="8.6" height="8.5" fill="#dcdcdc" stroke="#6e6e6e" stroke-width="0.7"/>
<path d="M72.6 420.4H77L74.8 423Z" fill="#111"/>
<path d="M86.4 419V423M87.2 421L89.6 419V423ZM96.8 421L99.2 419V423Z" fill="#a2a2a2" stroke="#a2a2a2" stroke-width="0.5"/>
<rect x="104.5" y="417" width="25" height="8.5" fill="#ffffff" stroke="#6e6e6e" stroke-width="0.7"/>
<rect x="129.5" y="417" width="8.6" height="8.5" fill="#dcdcdc" stroke="#6e6e6e" stroke-width="0.7"/>
<path d="M131.6 420.4H136L133.8 423Z" fill="#111"/>
<path d="M147.2 421L144.8 419V423ZM156.6 421L154.2 419V423ZM157.6 419V423" fill="#a2a2a2" stroke="#a2a2a2" stroke-width="0.5"/>
<path d="M161 416V425" stroke="#8a8a8a" stroke-width="0.8"/>
<path d="M283.6 418.2L286.6 420.6L283.6 423Z" fill="#111"/>
<path d="M289.5 416V425" stroke="#6e6e6e" stroke-width="1"/>
<rect x="290" y="416" width="10.5" height="9" fill="#bdbdbd"/>
<path d="M297.4 418.2L294.4 420.6L297.4 423Z" fill="#111"/>
<rect x="300.5" y="416" width="257.5" height="9" fill="#868686"/>
<rect x="423" y="416.4" width="11" height="8.6" fill="#d8d8d8" stroke="#efefef" stroke-width="0.5"/>
<rect x="558" y="416" width="8.5" height="9" fill="#a4a4a4"/>
<path d="M559.8 417.6L563.6 420.6L559.8 423.6Z" fill="#111"/>
<rect x="566.5" y="416" width="10.5" height="9" fill="#cacaca" stroke="#9a9a9a" stroke-width="0.5"/>
<rect x="578" y="415.6" width="22" height="9.4" fill="#c2c2c2"/>
<rect x="576.6" y="415.6" width="1.5" height="9.4" fill="#7a7a7a"/>
<rect x="435.5" y="238.4" width="141" height="125" fill="#b9b9b9" stroke="#4c4c4c" stroke-width="1.2"/>
<rect x="436.2" y="239.2" width="139.6" height="11.1" fill="#8e8e8e"/>
<rect x="436.6" y="239.6" width="22.8" height="10.8" fill="#bcbcbc"/>
<rect x="459.6" y="239.8" width="20.8" height="10.4" fill="#a3a3a3" stroke="#7a7a7a" stroke-width="0.5"/>
<path d="M552.4 243.6L554.4 245.4L552.4 247.2ZM555.2 243.6L557.2 245.4L555.2 247.2Z" fill="#222"/>
<path d="M561.6 240V250" stroke="#777" stroke-width="0.7"/>
<path d="M565.4 244.8H568.2L566.8 246.4Z" fill="#222"/><path d="M569 244.2H572.4M569 245.6H572.4M569 247H572.4" stroke="#444" stroke-width="0.6"/>
<rect x="440" y="255" width="133.5" height="92" fill="#b5b5b5" stroke="#6a6a6a" stroke-width="0.8"/>
<path d="M440 267.2H573.5" stroke="#747474" stroke-width="0.8"/>
<path d="M440 278.9H573.5" stroke="#747474" stroke-width="0.8"/>
<path d="M440 291H573.5" stroke="#747474" stroke-width="0.8"/>
<path d="M440 303.2H573.5" stroke="#747474" stroke-width="0.8"/>
<path d="M451.6 255V303.2M463.4 255V303.2" stroke="#8a8a8a" stroke-width="0.7"/>
<path d="M552.4 255V303.2" stroke="#8f8f8f" stroke-width="0.7"/>
<rect x="464.2" y="255.4" width="1.7" height="47.6" fill="#4a6cf0"/>
<path d="M442.6 261.1Q445.6 257.90000000000003 448.6 261.1Q445.6 264.1 442.6 261.1Z" fill="#d0d0d0" stroke="#333" stroke-width="0.7"/><circle cx="445.6" cy="261.0" r="1.3" fill="#222"/>
<path d="M442.6 273.04999999999995Q445.6 269.84999999999997 448.6 273.04999999999995Q445.6 276.04999999999995 442.6 273.04999999999995Z" fill="#d0d0d0" stroke="#333" stroke-width="0.7"/><circle cx="445.6" cy="272.94999999999993" r="1.3" fill="#222"/>
<path d="M442.6 284.95Q445.6 281.75 448.6 284.95Q445.6 287.95 442.6 284.95Z" fill="#d0d0d0" stroke="#333" stroke-width="0.7"/><circle cx="445.6" cy="284.84999999999997" r="1.3" fill="#222"/>
<path d="M442.6 297.1Q445.6 293.90000000000003 448.6 297.1Q445.6 300.1 442.6 297.1Z" fill="#d0d0d0" stroke="#333" stroke-width="0.7"/><circle cx="445.6" cy="297.0" r="1.3" fill="#222"/>
<path d="M470.2 259.6H475L472.6 263Z" fill="#111"/>
<rect x="479.5" y="255.8" width="11" height="10.6" fill="#ffffff" stroke="#333" stroke-width="0.9"/>
<defs><clipPath id="th1"><path d="M480 256.3H490V266H485V261.4H480Z"/></clipPath><clipPath id="th2"><path d="M492 268.5H501.6V277.8H496.8V273.3H492Z"/></clipPath></defs>
<circle cx="485" cy="261.1" r="4.1" fill="none" stroke="#1aad69" stroke-width="2.2" clip-path="url(#th1)"/>
<circle cx="558.3" cy="260.6" r="2.2" fill="#c8c8c8" stroke="#333" stroke-width="0.7"/>
<rect x="564.4" y="258.8" width="3.9" height="4.4" fill="#d4dcfa" stroke="#2a48b0" stroke-width="1.2"/>
<path d="M570.6 255.2H573.4V258Z" fill="#111"/>
<path d="M482 270.6V275.4L485.2 273Z" fill="#111"/>
<rect x="491.5" y="268" width="10.6" height="10.2" fill="#ffffff" stroke="#333" stroke-width="0.9"/>
<circle cx="496.8" cy="273.1" r="4" fill="none" stroke="#1aad69" stroke-width="2.1" clip-path="url(#th2)"/>
<circle cx="558.3" cy="273" r="3.2" fill="#cfcfcf" stroke="#777" stroke-width="1.5"/>
<rect x="564" y="271" width="5.4" height="5.6" fill="#4468e0"/>
<rect x="565.4" y="272.4" width="2.6" height="2.8" fill="#8aa2f2"/>
<rect x="491.5" y="280.2" width="10.6" height="10.0" fill="#ffffff" stroke="#555" stroke-width="0.7"/>
<circle cx="558.3" cy="285.4" r="2.2" fill="#c8c8c8" stroke="#333" stroke-width="0.7"/>
<rect x="491.5" y="292.3" width="10.6" height="10.0" fill="#ffffff" stroke="#555" stroke-width="0.7"/>
<circle cx="558.3" cy="297.5" r="2.2" fill="#c8c8c8" stroke="#333" stroke-width="0.7"/>
<circle cx="496.4" cy="352" r="2.1" fill="none" stroke="#333" stroke-width="0.8"/><path d="M494.9 353.6L492.8 355.8" stroke="#333" stroke-width="1.1"/>
<rect x="508" y="350" width="4.6" height="4.6" fill="none" stroke="#a4a4a4" stroke-width="0.7"/><path d="M522 351L528 353.6M528 351V354.6" stroke="#a4a4a4" stroke-width="0.8" fill="none"/>
<rect x="539.4" y="349.6" width="5" height="5.4" fill="#d8d8d8" stroke="#333" stroke-width="0.8"/><path d="M538.4 352.6V356H542.2" stroke="#333" stroke-width="0.8" fill="none"/>
<path d="M553.6 350.6H558.4M554 352.4H558M554 354H558M554 355.6H558" stroke="#a8a8a8" stroke-width="0.7"/>
<path d="M574.4 355.4L570.4 359.4M574.4 357.4L572.4 359.4" stroke="#9a9a9a" stroke-width="0.6"/>
<rect x="500.5" y="361.4" width="17.5" height="1.8" fill="#e8e8e8"/>

</svg>
<div class="t" style="left:5px;top:1px;font-size:12.5px;line-height:17px;font-weight:bold;color:#7a5530;letter-spacing:-0.2px;">Ai</div>
<div class="t" style="left:27.5px;top:5.3px;font-size:7.3px;color:#2c2c2c;">文件(F)</div>
<div class="t" style="left:60px;top:5.3px;font-size:7.3px;color:#2c2c2c;">编辑(E)</div>
<div class="t" style="left:93px;top:5.3px;font-size:7.3px;color:#2c2c2c;">对象(O)</div>
<div class="t" style="left:128px;top:5.3px;font-size:7.3px;color:#2c2c2c;">文字(T)</div>
<div class="t" style="left:161px;top:5.3px;font-size:7.3px;color:#2c2c2c;">选择(S)</div>
<div class="t" style="left:195px;top:5.3px;font-size:7.3px;color:#2c2c2c;">效果(C)</div>
<div class="t" style="left:229px;top:5.3px;font-size:7.3px;color:#2c2c2c;">视图(V)</div>
<div class="t" style="left:263px;top:5.3px;font-size:7.3px;color:#2c2c2c;">窗口(W)</div>
<div class="t" style="left:299px;top:5.3px;font-size:7.3px;color:#2c2c2c;">帮助(H)</div>
<div class="t" style="left:410px;top:5.3px;font-size:7.3px;color:#3a3a3a;">基本功能</div>
<div class="t" style="left:9px;top:24px;">剪切组</div>
<div class="t lk" style="left:150px;top:24px;">描边</div>
<div class="t" style="left:319px;top:24px;">基本</div>
<div class="t lk" style="left:351px;top:24px;">不透明度</div>
<div class="t" style="left:382px;top:24px;">样式:</div>
<div class="t lk" style="left:453px;top:24px;">对齐</div>
<div class="t lk" style="left:475px;top:24px;">变换</div>
<div class="t" style="left:49px;top:40px;line-height:10px;">未标题-1* @ 2069% (CMYK/预览)</div>
<div class="t" style="left:168px;top:40px;line-height:10px;font-size:7px;">×</div>
<div class="rl" style="left:69.4px;top:50.6px;">6</div>
<div class="rl" style="left:105.8px;top:50.6px;">3</div>
<div class="rl" style="left:142.1px;top:50.6px;">0</div>
<div class="rl" style="left:178.4px;top:50.6px;">3</div>
<div class="rl" style="left:214.8px;top:50.6px;">6</div>
<div class="rl" style="left:251.1px;top:50.6px;">9</div>
<div class="rl" style="left:287.4px;top:50.6px;">12</div>
<div class="rl" style="left:323.8px;top:50.6px;">15</div>
<div class="rl" style="left:360.1px;top:50.6px;">18</div>
<div class="rl" style="left:396.4px;top:50.6px;">21</div>
<div class="rl" style="left:432.7px;top:50.6px;">24</div>
<div class="rl" style="left:469.1px;top:50.6px;">27</div>
<div class="rl" style="left:505.4px;top:50.6px;">30</div>
<div class="rl" style="left:541.7px;top:50.6px;">33</div>
<div class="rl" style="left:44.6px;top:67.9px;">0</div>
<div class="rl" style="left:44.6px;top:104.0px;">3</div>
<div class="rl" style="left:44.6px;top:140.2px;">6</div>
<div class="rl" style="left:44.6px;top:176.4px;">9</div>
<div class="rl" style="left:44.6px;top:207.3px;">1</div>
<div class="rl" style="left:44.6px;top:212.5px;">2</div>
<div class="rl" style="left:44.6px;top:243.5px;">1</div>
<div class="rl" style="left:44.6px;top:248.7px;">5</div>
<div class="rl" style="left:44.6px;top:279.6px;">1</div>
<div class="rl" style="left:44.6px;top:284.8px;">8</div>
<div class="rl" style="left:44.6px;top:315.8px;">2</div>
<div class="rl" style="left:44.6px;top:320.9px;">1</div>
<div class="rl" style="left:44.6px;top:351.9px;">2</div>
<div class="rl" style="left:44.6px;top:357.1px;">4</div>
<div class="rl" style="left:44.6px;top:388.1px;">2</div>
<div class="rl" style="left:44.6px;top:393.2px;">7</div>
<div class="t" style="left:100.7px;top:23px;font-size:8px;font-weight:bold;color:#333;">?</div>
<div class="t" style="left:124.4px;top:23px;font-size:8px;font-weight:bold;color:#333;">?</div>
<div class="t" style="left:343.3px;top:5.2px;font-size:5.5px;line-height:7px;color:#e6e6e6;font-weight:bold;">Br</div>
<div class="t" style="left:25.6px;top:83.5px;font-family:'Liberation Serif',serif;font-size:14px;line-height:15px;color:#222;">T</div>
<div class="t" style="left:11px;top:263.5px;font-size:10.5px;line-height:13px;color:#1a1a1a;font-weight:bold;">?</div>
<div class="t" style="left:47.5px;top:416.5px;font-size:6.5px;line-height:9px;color:#222;">2069%</div>
<div class="t" style="left:107px;top:416.5px;font-size:6.5px;line-height:9px;color:#222;">1</div>
<div class="t" style="left:214.5px;top:416px;font-size:7.5px;line-height:9.5px;color:#222;">选择</div>
<div class="t" style="left:440px;top:240.2px;line-height:10px;color:#1c1c1c;">图层</div>
<div class="t" style="left:462.5px;top:240.2px;line-height:10px;color:#4c4c4c;">画板</div>
<div class="t" style="left:493.3px;top:256px;line-height:10px;">图层 1</div>
<div class="t" style="left:505.5px;top:268px;line-height:10px;">&lt;剪切组&gt;</div>
<div class="t" style="left:505.5px;top:280.2px;line-height:10px;">&lt;参考线&gt;</div>
<div class="t" style="left:505.5px;top:292.3px;line-height:10px;">&lt;参考线&gt;</div>
<div class="t" style="left:439.3px;top:348px;line-height:10px;font-weight:500;color:#111;">1 个图层</div>

</body>
</html>
